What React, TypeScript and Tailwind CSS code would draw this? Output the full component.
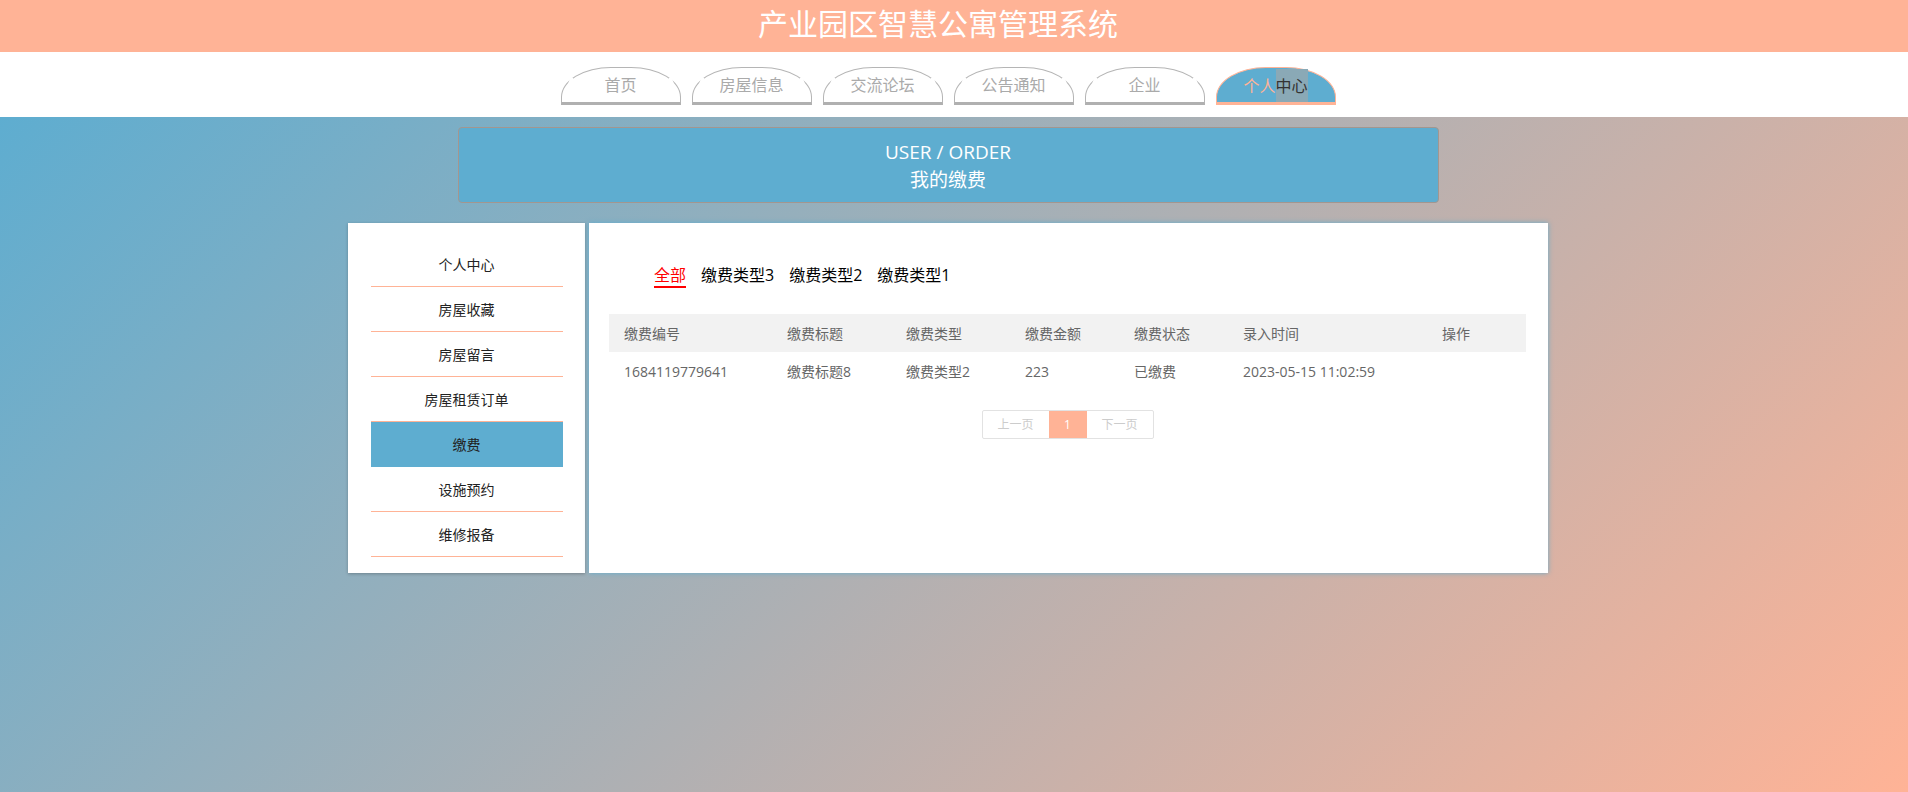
import React, { useState } from 'react';

const navItems = ['首页', '房屋信息', '交流论坛', '公告通知', '企业', '个人中心'];

const sideItems = ['个人中心', '房屋收藏', '房屋留言', '房屋租赁订单', '缴费', '设施预约', '维修报备'];

const filters = ['全部', '缴费类型3', '缴费类型2', '缴费类型1'];

const columns = ['缴费编号', '缴费标题', '缴费类型', '缴费金额', '缴费状态', '录入时间', '操作'];

const rows = [
  ['1684119779641', '缴费标题8', '缴费类型2', '223', '已缴费', '2023-05-15 11:02:59', ''],
];

const gridCols = 'grid grid-cols-[163px_119px_119px_109px_109px_199px_1fr]';

const App = () => {
  const [activeFilter, setActiveFilter] = useState(0);
  const [activeSide, setActiveSide] = useState(4);

  return (
    <div
      className="min-h-[792px] flex flex-col"
      style={{ fontFamily: '"Open Sans", "Noto Sans CJK SC", sans-serif' }}
    >
      {/* title bar */}
      <div className="h-[52px] bg-[#ffb396] flex items-center justify-center pr-[32px] pb-[5px]">
        <h1 className="text-white text-[30px] leading-[40px]">产业园区智慧公寓管理系统</h1>
      </div>

      {/* top nav */}
      <div className="h-[65px] bg-white pr-[12px] flex justify-center items-start pt-[15px]">
        <div className="flex gap-[11px]">
          {navItems.map((item, i) => {
            const active = i === navItems.length - 1;
            return active ? (
              <div
                key={item}
                className="w-[120px] h-[38px] bg-[#5eadd0] border border-[#ffb396] border-b-[3px] rounded-[50px_50px_0_0/30px_30px_0_0] flex justify-center text-[16px] leading-[34px] pt-[1px]"
              >
                <span className="text-[#ffb396]">个人</span>
                <span className="bg-[#8aa9b6] text-[#333] self-stretch">中心</span>
              </div>
            ) : (
              <div
                key={item}
                className="w-[120px] h-[38px] bg-white border border-[#b5b5b5] border-b-[3px] border-b-[#b0b0b0] rounded-[50px_50px_0_0/30px_30px_0_0] flex items-center justify-center text-[16px] text-[#aaa]"
              >
                {item}
              </div>
            );
          })}
        </div>
      </div>

      {/* body */}
      <div className="flex-1 bg-[linear-gradient(135deg,#5eadd0,#ffb396)] pr-[12px] pt-[10px] pb-[20px]">
        <div className="w-[981px] h-[76px] mx-auto bg-[#5eadd0] border border-[#a3968f] rounded-[4px] flex flex-col items-center justify-center text-white text-[19px] leading-[28px] pt-[2px]">
          <div>USER / ORDER</div>
          <div>我的缴费</div>
        </div>

        <div className="w-[1200px] mx-auto mt-[20px] flex gap-[4px]">
          {/* side menu */}
          <div className="w-[237px] h-[350px] bg-white pt-[19px] shadow-[0_1px_3px_rgba(0,0,0,0.25)]">
            {sideItems.map((item, i) => (
              <div
                key={item}
                onClick={() => setActiveSide(i)}
                className={`w-[192px] mx-auto h-[45px] border-b flex items-center justify-center text-[14px] text-[#222] cursor-pointer ${
                  activeSide === i ? 'bg-[#5eadd0] border-[#5eadd0]' : 'border-[#ffb396]'
                }`}
              >
                {item}
              </div>
            ))}
          </div>

          {/* main */}
          <div className="flex-1 h-[350px] bg-white pl-[20px] pr-[22px] pt-[41px] shadow-[0_0_5px_rgba(94,173,208,0.95)]">
            <div className="flex gap-[15px] ml-[45px]">
              {filters.map((f, i) => (
                <button
                  key={f}
                  onClick={() => setActiveFilter(i)}
                  className={`text-[16px] leading-[22px] border-b-2 ${
                    activeFilter === i ? 'text-[#ff0000] border-[#ff0000]' : 'text-black border-transparent'
                  }`}
                >
                  {f}
                </button>
              ))}
            </div>

            <div className="mt-[26px] text-[14px] text-[#666]">
              <div className={`${gridCols} h-[38px] bg-[#f2f2f2] items-center`}>
                {columns.map((c) => (
                  <div key={c} className="pl-[15px]">{c}</div>
                ))}
              </div>
              {rows.map((r, i) => (
                <div key={i} className={`${gridCols} h-[38px] items-center`}>
                  {r.map((cell, j) => (
                    <div key={j} className="pl-[15px]">{cell}</div>
                  ))}
                </div>
              ))}
            </div>

            <div className="flex justify-center mt-[20px]">
              <div className="flex h-[29px] border border-[#e2e2e2] rounded-[2px] text-[12px] text-[#ccc]">
                <button className="w-[66px] flex items-center justify-center">上一页</button>
                <button className="w-[38px] bg-[#ffb396] text-white flex items-center justify-center">1</button>
                <button className="w-[66px] flex items-center justify-center">下一页</button>
              </div>
            </div>
          </div>
        </div>
      </div>
    </div>
  );
};

export default App;
